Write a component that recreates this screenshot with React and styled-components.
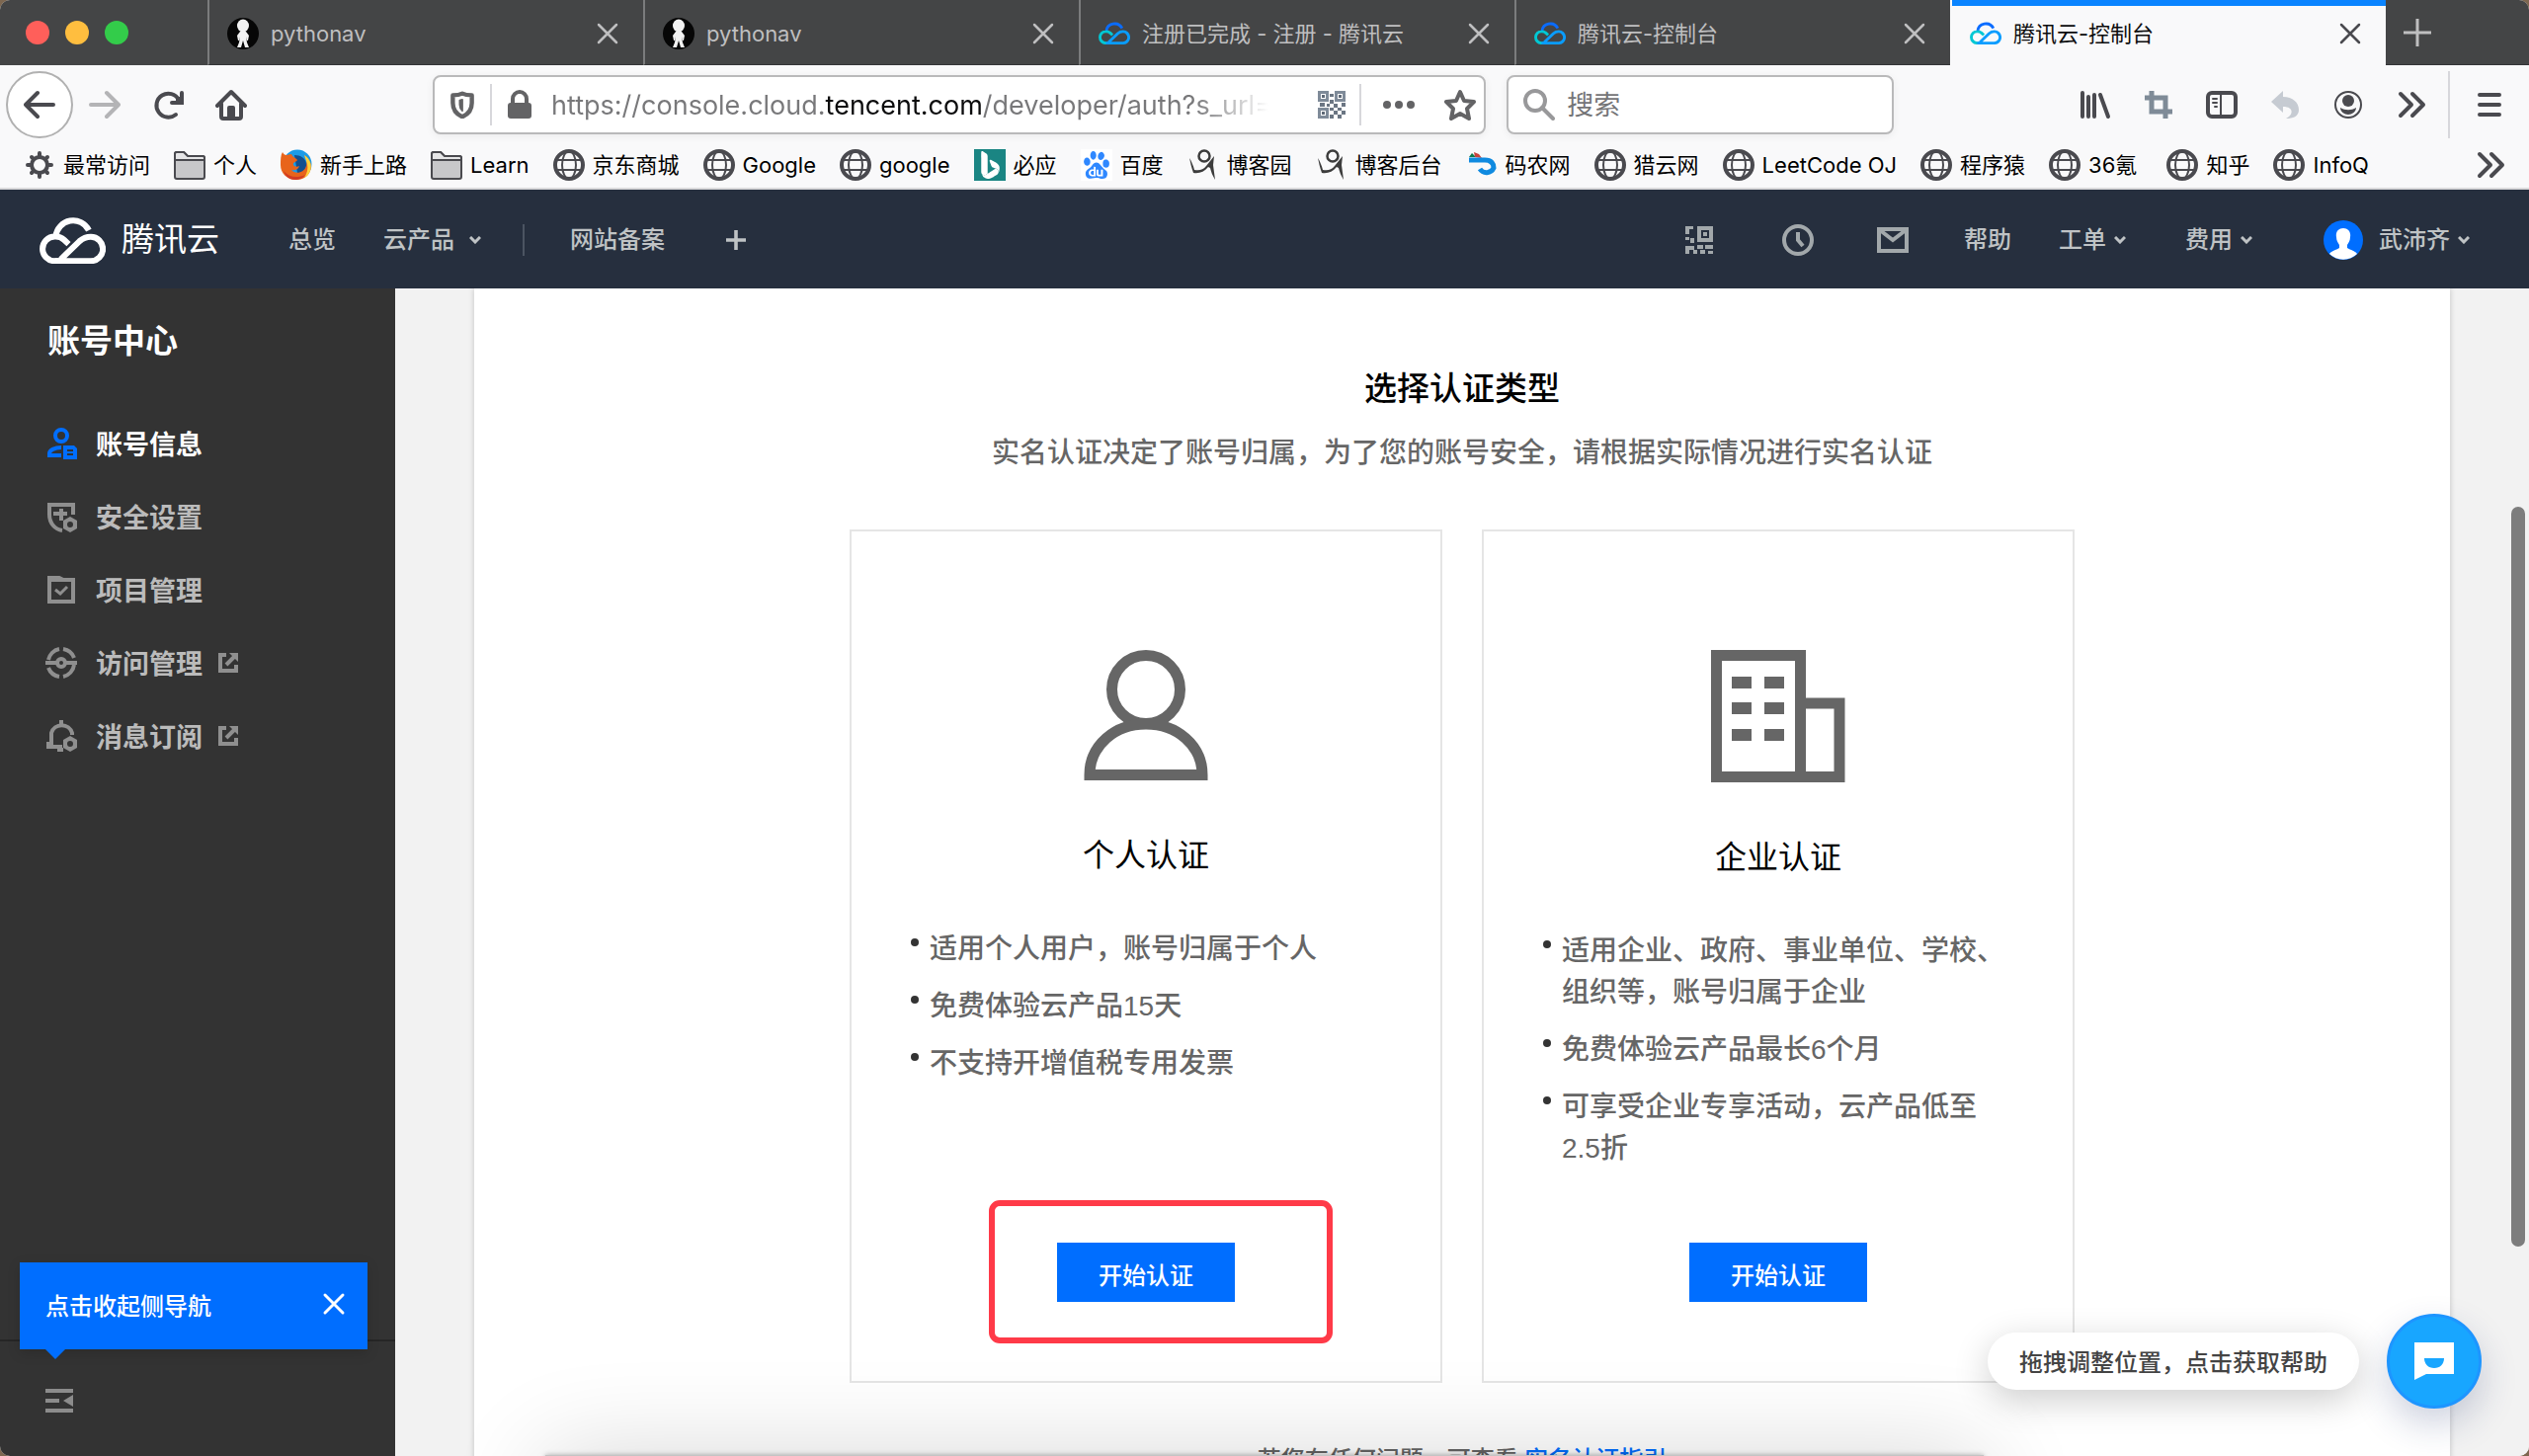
import React from "react";
import styled, { createGlobalStyle, css } from "styled-components";
import { BsBing } from "react-icons/bs";
import { SiBaidu } from "react-icons/si";

const GlobalStyle = createGlobalStyle`
  * {
    box-sizing: border-box;
  }
  body {
    margin: 0;
    background: #7d6750;
    overflow: hidden;
  }
  h1, h2, p, ul {
    margin: 0;
    padding: 0;
  }
  ul {
    list-style: none;
  }
  a {
    color: inherit;
    text-decoration: none;
  }
  button {
    margin: 0;
    padding: 0;
    border: none;
    background: none;
    color: inherit;
    font: inherit;
    cursor: pointer;
  }
  svg {
    display: block;
    flex: none;
  }
`;

const chromeFont = `Inter, "Noto Sans CJK SC", sans-serif`;
const pageFont = `"Liberation Sans", "Noto Sans CJK SC", sans-serif`;

const center = css`
  display: flex;
  align-items: center;
  justify-content: center;
`;

/* ---------- window ---------- */

const Window = styled.div`
  height: 100vh;
  display: flex;
  flex-direction: column;
  overflow: hidden;
  border-radius: 10px;
  background: #f2f2f2;
`;

const TabBar = styled.div`
  height: 66px;
  flex: none;
  display: flex;
  background: #444546;
  font-family: ${chromeFont};
  font-size: 22px;
  color: #bfbfc0;
`;

const Lights = styled.div`
  width: 210px;
  flex: none;
  display: flex;
  align-items: center;
  gap: 16px;
  padding-left: 26px;
`;

const Light = styled.button`
  width: 24px;
  height: 24px;
  border-radius: 50%;
  background: ${(props) => props.$color};
`;

const Tab = styled.div`
  flex: 0 1 441px;
  min-width: 0;
  display: flex;
  align-items: center;
  gap: 12px;
  padding: 2px 24px 0 18px;
  border-left: 2px solid ${(props) => (props.$active ? "#f9f9fa" : "#7b7c7d")};
  border-bottom: 1px solid #333436;
  ${(props) =>
    props.$active &&
    css`
      background: #f9f9fa;
      color: #4a4a4f;
      border-left-color: #f9f9fa;
      border-bottom-color: #f9f9fa;
      box-shadow: inset 0 6px #0a84ff;
    `}
`;

const TabTitle = styled.span`
  flex: 1;
  line-height: 32px;
  white-space: nowrap;
  overflow: hidden;
  color: ${(props) => (props.$active ? "#0c0c0d" : "inherit")};
`;

const TabEnd = styled.div`
  flex: 1;
  display: flex;
  align-items: center;
  padding-left: 18px;
  border-bottom: 1px solid #333436;
`;

const IconButton = styled.button`
  ${center};
  width: ${(props) => props.$w || 64}px;
  height: ${(props) => props.$h || 64}px;
  flex: none;
`;

const NavBar = styled.div`
  height: 80px;
  flex: none;
  display: flex;
  align-items: center;
  padding-left: 6px;
  background: #f9f9fa;
  color: #4a4a4f;
  font-family: ${chromeFont};
`;

const BackButton = styled.button`
  ${center};
  width: 68px;
  height: 68px;
  flex: none;
  border: 2px solid #b1b1b1;
  border-radius: 50%;
  background: #fff;
`;

const Spacer = styled.div`
  flex: 32;
`;

const Fields = styled.div`
  flex: 275;
  min-width: 0;
  display: flex;
  gap: 21px;
`;

const Field = styled.div`
  flex: ${(props) => props.$grow};
  min-width: 0;
  height: 60px;
  display: flex;
  align-items: center;
  border: 2px solid #b9b9ba;
  border-radius: 8px;
  background: #fff;
  color: #636365;
  box-shadow: 0 2px 8px rgba(0, 0, 0, 0.06);
`;

const UrlInput = styled.input`
  flex: 1;
  min-width: 0;
  height: 40px;
  margin-left: 4px;
  padding: 0;
  border: none;
  outline: none;
  font-family: ${chromeFont};
  font-size: 27px;
  color: transparent;
  background: linear-gradient(
    90deg,
    #78787a 277px,
    #0c0c0d 277px,
    #0c0c0d 435px,
    #78787a 435px,
    #78787a 650px,
    rgba(120, 120, 122, 0) 726px
  );
  -webkit-background-clip: text;
  background-clip: text;
`;

const SearchInput = styled.input`
  flex: 1;
  min-width: 0;
  padding: 0;
  margin-left: 12px;
  border: none;
  outline: none;
  background: none;
  font-family: ${chromeFont};
  font-size: 27px;
  &::placeholder {
    color: #757577;
    opacity: 1;
  }
`;

const SearchLabel = styled.label`
  padding-left: 15px;
`;

const FieldLine = styled.div`
  width: 2px;
  height: 42px;
  flex: none;
  background: #d7d7db;
`;

const BarLine = styled.div`
  width: 2px;
  height: 68px;
  margin-left: 5px;
  background: #d7d7db;
`;

const BookmarkBar = styled.nav`
  height: 46px;
  flex: none;
  display: flex;
  align-items: center;
  padding: 0 12px 2px 24px;
  border-bottom: 2px solid #d9d9da;
  background: #f9f9fa;
  color: #4a4a4f;
  font-family: ${chromeFont};
  font-size: 22px;
`;

const Bookmark = styled.a`
  display: flex;
  align-items: center;
  gap: 8px;
  margin-right: 24px;
  white-space: nowrap;
`;

const BookmarkText = styled.span`
  line-height: 32px;
  color: #000;
`;

const MoreBookmarks = styled.div`
  margin-left: auto;
  width: 54px;
`;

const Tile = styled.span`
  ${center};
  width: 32px;
  height: 32px;
  background: ${(props) => props.$bg};
  color: ${(props) => props.$fg};
`;

/* ---------- cloud console ---------- */

const Header = styled.header`
  height: 100px;
  flex: none;
  display: flex;
  align-items: center;
  padding: 2px 60px 0 40px;
  background: #262f3e;
  color: #bfc3c5;
  font-family: ${pageFont};
  font-size: 24px;
  font-weight: 500;
`;

const Brand = styled.a`
  display: flex;
  align-items: center;
  gap: 16px;
  margin-right: 46px;
  color: #fff;
  font-size: 33px;
  font-weight: 400;
  line-height: 48px;
`;

const HeaderLink = styled.a`
  display: flex;
  align-items: center;
  padding: 0 24px;
  line-height: 36px;
  white-space: nowrap;
`;

const HeaderMenu = styled.button`
  display: flex;
  align-items: center;
  gap: ${(props) => (props.$wide ? 15 : 8)}px;
  padding: 0 ${(props) => (props.$wide ? 24 : 36)}px 0 24px;
  line-height: 36px;
  white-space: nowrap;
`;

const HeaderLine = styled.div`
  width: 2px;
  height: 32px;
  margin: 0 22px 0 18px;
  background: #4b5462;
`;

const HeaderRight = styled.div`
  margin-left: auto;
  display: flex;
  align-items: center;
`;

const UserMenu = styled.button`
  display: flex;
  align-items: center;
  gap: 8px;
  padding-left: 36px;
  line-height: 36px;
`;

const UserName = styled.span`
  margin-left: 8px;
`;

const Body = styled.div`
  flex: 1;
  min-height: 0;
  display: flex;
  font-family: ${pageFont};
`;

const Sidebar = styled.aside`
  width: 400px;
  flex: none;
  display: flex;
  flex-direction: column;
  background: #333;
`;

const SideTitle = styled.h2`
  padding: 30px 48px 0;
  color: #fff;
  font-size: 33px;
  font-weight: 700;
  line-height: 48px;
`;

const SideList = styled.ul`
  flex: 1;
  padding-top: 42px;
`;

const SideLink = styled.a`
  height: 74px;
  display: flex;
  align-items: center;
  padding: 0 46px;
  color: ${(props) => (props.$active ? "#fff" : "#bbb")};
  font-size: 27px;
  font-weight: 700;
  svg {
    color: ${(props) => (props.$active ? "#006eff" : "#8f8f8f")};
  }
`;

const SideText = styled.span`
  margin: 0 16px 0 19px;
  padding-top: 3px;
  line-height: 40px;
`;

const SideFoot = styled.div`
  position: relative;
  height: 118px;
  padding: 48px 44px;
  border-top: 2px solid #262626;
`;

const Tip = styled.div`
  position: absolute;
  left: 20px;
  right: 28px;
  bottom: 108px;
  height: 88px;
  display: flex;
  align-items: center;
  justify-content: space-between;
  padding: 0 22px 4px 26px;
  background: #006eff;
  color: #fff;
  font-size: 24px;
  font-weight: 500;
  box-shadow: 0 4px 12px rgba(0, 0, 0, 0.15);
  &::after {
    content: "";
    position: absolute;
    left: 26px;
    top: 100%;
    border: 10px solid transparent;
    border-top-color: #006eff;
    border-bottom: none;
  }
`;

const Main = styled.main`
  position: relative;
  flex: 1;
  min-width: 0;
  overflow: hidden;
  padding: 0 80px;
  background: #f2f2f2;
`;

const Panel = styled.section`
  min-height: 100%;
  padding: 78px 0 80px;
  background: #fff;
  box-shadow: 0 0 6px rgba(0, 0, 0, 0.2);
  text-align: center;
`;

const Title = styled.h1`
  color: #000;
  font-size: 33px;
  font-weight: 500;
  line-height: 48px;
`;

const Lead = styled.p`
  margin-top: 20px;
  color: #666;
  font-size: 28px;
  font-weight: 500;
  line-height: 42px;
`;

const Cards = styled.div`
  display: flex;
  justify-content: center;
  gap: 40px;
  margin-top: 56px;
`;

const Card = styled.article`
  width: 600px;
  min-height: 864px;
  display: flex;
  flex-direction: column;
  align-items: center;
  padding: 120px 60px 80px;
  border: 2px solid #e5e5e5;
`;

const CardTitle = styled.h2`
  margin: 52px 0 50px;
  color: #000;
  font-size: 32px;
  font-weight: 400;
  line-height: 48px;
`;

const Points = styled.ul`
  width: 100%;
  display: flex;
  flex-direction: column;
  gap: 16px;
  color: #666;
  font-size: 28px;
  font-weight: 500;
  line-height: 42px;
  text-align: left;
`;

const Point = styled.li`
  position: relative;
  padding-left: 19px;
  &::before {
    content: "";
    position: absolute;
    left: 0;
    top: 10px;
    width: 8px;
    height: 8px;
    border-radius: 50%;
    background: #333;
  }
`;

const Action = styled.div`
  position: relative;
  margin-top: auto;
`;

const StartButton = styled.button`
  width: 180px;
  height: 60px;
  padding-top: 3px;
  background: #006eff;
  color: #fff;
  font-size: 24px;
  font-weight: 500;
`;

const Marker = styled.div`
  position: absolute;
  inset: -43px -99px -42px -69px;
  border: 6px solid #ff3a48;
  border-radius: 11px;
  pointer-events: none;
`;

const Guide = styled.p`
  margin-top: 60px;
  color: #666;
  font-size: 24px;
  font-weight: 500;
  line-height: 36px;
  a {
    color: #006eff;
  }
`;

const BottomSheet = styled.div`
  position: absolute;
  left: 152px;
  right: 552px;
  bottom: -200px;
  height: 201px;
  background: #c4c4c4;
  box-shadow: 0 0 100px rgba(0, 0, 0, 0.16), 0 0 5px rgba(0, 0, 0, 0.3);
`;

const ScrollThumb = styled.div`
  position: absolute;
  right: 4px;
  top: 221px;
  bottom: 212px;
  width: 14px;
  border-radius: 7px;
  background: #7d7d7d;
`;

const Help = styled.div`
  position: absolute;
  right: 48px;
  bottom: 48px;
  display: flex;
  align-items: center;
  gap: 28px;
`;

const HelpText = styled.div`
  padding: 4px 32px 0;
  border-radius: 29px;
  background: #fff;
  color: #444;
  font-size: 24px;
  font-weight: 500;
  line-height: 54px;
  box-shadow: 0 10px 36px rgba(0, 0, 0, 0.2);
`;

const HelpButton = styled.button`
  ${center};
  width: 96px;
  height: 96px;
  border: 3px solid #1e95ff;
  border-radius: 50%;
  background: #18a6ff;
  box-shadow: 0 16px 36px rgba(30, 50, 110, 0.22);
`;

/* ---------- icons ---------- */

const Stroke = ({ size = 32, w = 4, color = "currentColor", children }) => (
  <svg
    width={size}
    height={size}
    viewBox="0 0 32 32"
    fill="none"
    stroke={color}
    strokeWidth={w}
    strokeLinecap="round"
    strokeLinejoin="round"
  >
    {children}
  </svg>
);

const CloudLogo = ({ width = 67, colors = ["#fff", "#fff", "#fff"] }) => (
  <svg
    width={width}
    height={width * 0.72}
    viewBox="0 0 200 144"
    fill="none"
    strokeWidth="18"
  >
    <path stroke={colors[0]} d="M49 60A53 53 0 0 1 149 42" />
    <path
      stroke={colors[1]}
      d="M88 84L74 71A38 38 0 0 0 46 61.500A36.750 36.750 0 0 0 46 135H60"
    />
    <path
      stroke={colors[2]}
      d="M46 135H155A36 36 0 0 0 155 62C141 62 130 67 121 75L64 130"
    />
  </svg>
);

const tint = ["#0a6cff", "#00c8d4", "#0a9dff"];

const Figure = () => (
  <svg width="32" height="32" viewBox="0 0 32 32">
    <circle cx="16" cy="16" r="16" fill="#060606" />
    <g fill="#f2f2f2">
      <ellipse cx="16" cy="8" rx="6" ry="6.500" />
      <path d="M13 14h6l3 4-1 5h-1l-1-4 1 6 2 5h-4l-2-7-2 7h-4l2-5 1-6-1 4h-1l-1-5z" />
    </g>
  </svg>
);

const Close = ({ w = 2.5, size = 24 }) => (
  <Stroke size={size} w={w * 1.33}>
    <path d="M4 4L28 28M28 4L4 28" />
  </Stroke>
);

const Plus = ({ size = 28, w = 3 }) => (
  <svg width={size} height={size} viewBox="0 0 28 28" stroke="currentColor" strokeWidth={w}>
    <path d="M14 0V28M0 14H28" />
  </svg>
);

const Globe = () => (
  <Stroke w={2}>
    <circle cx="16" cy="16" r="14" strokeWidth="4" />
    <ellipse cx="16" cy="16" rx="7" ry="14" />
    <path d="M3 11H29M3 21H29" />
  </Stroke>
);

const Folder = () => (
  <Stroke w={2}>
    <path
      fill="#c8c8ca"
      d="M1 5a2 2 0 0 1 2-2h7l4 4h15a2 2 0 0 1 2 2v19a2 2 0 0 1-2 2H3a2 2 0 0 1-2-2z"
    />
    <path fill="#e6e6e7" d="M1 11V5a2 2 0 0 1 2-2h7l4 4h15a2 2 0 0 1 2 2v2z" />
  </Stroke>
);

const Gear = () => (
  <Stroke w={4}>
    <circle cx="16" cy="16" r="8" />
    <path d="M16 4v3M16 25v3M4 16h3M25 16h3M8 8l1.500 1.500M22.500 22.500L24 24M24 8l-1.500 1.500M9.500 22.500L8 24" />
  </Stroke>
);

const Firefox = () => (
  <svg width="32" height="32" viewBox="0 0 32 32">
    <circle cx="17" cy="15" r="14.500" fill="#1c9be6" />
    <path d="M14 6c6 0 12 3 12 10s-5 9-9 8z" fill="#134f8e" />
    <path
      d="M2 3c1 2 2 3 4 3l5-1c1 3 5 4 6 6-1 2-5 2-4 5 1 2 4 2 6 1-1 4-5 5-8 4 4 5 13 3 15-4 1-4 0-8-2-11 6 4 8 10 6 16-2 6-8 9-14 9C6 31 0 24 0 16 0 11 0 6 2 3z"
      fill="#e8641b"
    />
    <path d="M24 6c6 4 8 10 6 16-1 3-3 5-6 7 3-5 4-9 3-14z" fill="#ffd23c" />
    <path d="M3 22c5 6 13 8 22 4-3 4-7 5-10 5C9 31 5 28 3 22z" fill="#d23b22" />
  </svg>
);

const Blogger = () => (
  <svg width="32" height="32" viewBox="0 0 32 32">
    <circle cx="17" cy="7" r="5.500" fill="none" stroke="#3c3c3c" strokeWidth="2.500" />
    <path
      d="M2 9c2 3 4 8 5 12 5 1 9 0 12-4l8-10-1 9 2 15c-3-5-4-8-5-12l-2-1c-4 5-9 7-15 6C4 19 3 13 2 9z"
      fill="#3c3c3c"
    />
  </svg>
);

const Coder = () => (
  <svg width="32" height="32" viewBox="0 0 32 32">
    <path d="M3 8l3-4 4 4z" fill="#0c7a4b" />
    <path d="M8 3l5 2 3 4-7-1z" fill="#c8433c" />
    <path
      d="M3 11H19C26 11 28 15 28 19A8 8 0 0 1 14 20"
      fill="none"
      stroke="#0f8ae0"
      strokeWidth="5"
    />
  </svg>
);

const BackArrow = ({ flip, color }) => (
  <Stroke color={color}>
    {flip ? <path d="M2 16H30M18 4L30 16L18 28" /> : <path d="M30 16H2M14 4L2 16L14 28" />}
  </Stroke>
);

const Reload = () => (
  <Stroke>
    <path d="M24 26A12 12 0 1 1 27 11" />
    <path d="M30 4V14H20" strokeLinejoin="miter" />
    <path d="M25 9h4v4h-4z" fill="currentColor" strokeWidth="2" />
  </Stroke>
);

const Home = () => (
  <Stroke>
    <path d="M2 17L16 3L30 17" />
    <path d="M6 15V28a2 2 0 0 0 2 2H24a2 2 0 0 0 2-2V15" />
    <path d="M14 28V19h4V28" />
  </Stroke>
);

const Shield = () => (
  <Stroke size={28} w={5}>
    <path d="M16 3C12 5 9 5 5 5v9c0 8 4 13 11 16 7-3 11-8 11-16V5c-4 0-7 0-11-2z" />
    <path d="M16 10l-3 1v5c0 3 1 5 3 7z" fill="currentColor" strokeWidth="2" />
  </Stroke>
);

const Lock = () => (
  <svg width="26" height="30" viewBox="0 0 26 30">
    <path d="M6 14V9a7 7 0 0 1 14 0v5" fill="none" stroke="#636365" strokeWidth="4" />
    <rect x="1" y="13" width="24" height="16" rx="3" fill="#636365" />
  </svg>
);

const qrFinder = (x, y) => (
  <>
    <rect x={x + 1.5} y={y + 1.5} width="8" height="8" fill="none" stroke="#7f8b99" strokeWidth="3" />
    <rect x={x + 4} y={y + 4} width="3" height="3" fill="#5f6a77" />
  </>
);

const UrlQr = () => (
  <svg width="28" height="28" viewBox="0 0 28 28">
    {qrFinder(0, 0)}
    {qrFinder(17, 0)}
    {qrFinder(0, 17)}
    <path
      d="M12 3h4v3h-4zM12 9h4v4h-4zM2 12h5v4H2zM9 13h3v3H9zM16 13h4v4h-4zM24 12h4v4h-4zM20 17h4v3h-4zM12 17h4v3h-4zM16 20h4v4h-4zM24 20h4v4h-4zM12 24h4v4h-4zM20 24h4v4h-4z"
      fill="#6b7683"
    />
  </svg>
);

const Dots = () => (
  <svg width="32" height="32" viewBox="0 0 32 32" fill="currentColor">
    <circle cx="4" cy="16" r="4" />
    <circle cx="16" cy="16" r="4" />
    <circle cx="28" cy="16" r="4" />
  </svg>
);

const Star = () => (
  <Stroke>
    <path d="M16 3l4 9 10 1-7 7 2 10-9-5-9 5 2-10-7-7 10-1z" />
  </Stroke>
);

const SearchIcon = () => (
  <Stroke color="#98989a">
    <circle cx="12" cy="12" r="10" />
    <path d="M19 19L30 30" />
  </Stroke>
);

const Library = () => (
  <Stroke>
    <path d="M3 4V28M9 8V28M15 6V28M21 6L29 28" />
  </Stroke>
);

const Crop = () => (
  <svg width="28" height="28" viewBox="0 0 28 28" fill="none" stroke="#7f8b97" strokeWidth="5">
    <path d="M0 7H21V28M7 0V21H28" />
  </svg>
);

const SidebarIcon = () => (
  <Stroke>
    <rect x="2" y="4" width="28" height="24" rx="4" />
    <path d="M15 5V27" strokeWidth="2" />
    <path d="M7 10h4M7 14h4M9 18h2" strokeWidth="2" />
  </Stroke>
);

const Undo = () => (
  <svg width="28" height="28" viewBox="0 0 28 28" fill="#c6cbd2">
    <path d="M0 11L12 0V6C22 6 28 12 28 19S22 28 15 28C22 25 24 16 12 16V22z" />
  </svg>
);

const Account = () => (
  <Stroke w={2}>
    <circle cx="16" cy="16" r="13" />
    <circle cx="16" cy="12" r="6" fill="currentColor" stroke="none" />
    <path d="M8 19c5 3 11 3 16 0 0 4-4 7-8 7s-8-3-8-7z" fill="currentColor" stroke="none" />
  </Stroke>
);

const Chevrons = () => (
  <Stroke>
    <path d="M5 5L16 16L5 27M17 5L28 16L17 27" />
  </Stroke>
);

const Menu = () => (
  <Stroke>
    <path d="M6 6H26M6 16H26M6 26H26" />
  </Stroke>
);

const Caret = () => (
  <svg width="12" height="8" viewBox="0 0 12 8" fill="none" stroke="currentColor" strokeWidth="3">
    <path d="M1 1L6 6L11 1" />
  </svg>
);

const HeaderQr = () => (
  <svg width="28" height="28" viewBox="0 0 28 28" fill="#a2a8ab">
    <path d="M0 0h8v3H4v5H0zM0 11h4v3H0zM5 12h4v5H5zM0 20h9v4H4v4H0zM8 24h4v4H8z" />
    <path d="M12 0h16v16H12zM16 4v8h8V4z" fillRule="evenodd" />
    <path d="M18 6h4v4h-4zM12 19h6v4h-6zM20 19h8v4h-8zM15 24h5v4h-5zM23 25h5v3h-5z" />
  </svg>
);

const Clock = () => (
  <svg width="32" height="32" viewBox="0 0 32 32" fill="none" stroke="#a2a8ab" strokeWidth="4">
    <circle cx="16" cy="16" r="14" />
    <path d="M16 8V16L21 22" />
  </svg>
);

const Mail = () => (
  <svg width="32" height="26" viewBox="0 0 32 26" fill="none" stroke="#a2a8ab" strokeWidth="4">
    <path d="M2 2H30V24H2zM3 3L16 13L29 3" />
  </svg>
);

const Avatar = () => (
  <svg width="40" height="40" viewBox="0 0 40 40">
    <circle cx="20" cy="20" r="20" fill="#006eff" />
    <path
      d="M20 8c5 0 8 4 7 9 0 4-2 6-3 8v3c3 2 8 3 10 6a20 20 0 0 1-28 0c2-3 7-4 10-6v-3c-1-2-3-4-3-8-1-5 2-9 7-9z"
      fill="#fff"
    />
  </svg>
);

const SideIcon = ({ children }) => (
  <svg width="32" height="32" viewBox="0 0 32 32" fill="none" stroke="currentColor" strokeWidth="4">
    {children}
  </svg>
);

const hexNut = (
  <path
    d="M25 16l7 4v8l-7 4-7-4v-8zM25 21a3 3 0 1 0 0 6 3 3 0 0 0 0-6z"
    fill="currentColor"
    fillRule="evenodd"
    stroke="none"
  />
);

const AccountInfo = () => (
  <SideIcon>
    <circle cx="16" cy="8" r="6" />
    <path d="M16 20C9 20 4 23 4 26V28H16" />
    <path
      d="M18 18h11l3 3v11H18zM22 22v2h6v-2zM22 26v2h6v-2z"
      fill="currentColor"
      fillRule="evenodd"
      stroke="none"
    />
  </SideIcon>
);

const Security = () => (
  <SideIcon>
    <path d="M28 14V4H4V14C4 23 10 29 17 30" />
    <path d="M8 13H22M16 8V20" />
    {hexNut}
  </SideIcon>
);

const Project = () => (
  <SideIcon>
    <path d="M4 4H14L18 6H28V28H4z" />
    <path d="M10 16L15 20L22 13" strokeWidth="3" />
    <path d="M4 6H28" />
  </SideIcon>
);

const Access = () => (
  <SideIcon>
    <circle cx="16" cy="16" r="4" />
    <path d="M0 16H12M20 16H32" />
    <path d="M3 13A14 14 0 0 1 14 2M18 2A14 14 0 0 1 29 11M29 18A14 14 0 0 1 18 30M14 30A14 14 0 0 1 3 21" />
  </SideIcon>
);

const Bell = () => (
  <SideIcon>
    <path d="M27 15V13A11 11 0 0 0 6 13V24H3V27H17" />
    <path d="M16 0V4M12 30H18" />
    {hexNut}
  </SideIcon>
);

const External = () => (
  <svg width="20" height="20" viewBox="0 0 20 20" fill="none" stroke="currentColor" strokeWidth="4">
    <path d="M8 2H2V18H18V12M8 12L17 3" />
    <path d="M11 0H20V9z" fill="currentColor" stroke="none" />
  </svg>
);

const Collapse = () => (
  <svg width="32" height="24" viewBox="0 0 32 24" fill="#8c8c8c">
    <path d="M2 0h28v4H2zM2 10h14v4H2zM2 20h28v4H2zM30 6v12l-10-6z" />
  </svg>
);

const Person = () => (
  <svg width="126" height="132" viewBox="0 0 126 132" fill="none" stroke="#666" strokeWidth="11">
    <circle cx="63" cy="40" r="34.500" />
    <path d="M6 126.500C6 96 32 75 63 75S120 96 120 126.500z" />
  </svg>
);

const Building = () => (
  <svg width="136" height="134" viewBox="0 0 136 134" fill="none" stroke="#666" strokeWidth="11">
    <path d="M5.500 5.500H90.500V128.500H5.500zM90.500 54H130V128.500H90.500" />
    <path
      d="M21 27h20v12H21zM54 27h20v12H54zM21 53h20v12H21zM54 53h20v12H54zM21 80h20v12H21zM54 80h20v12H54z"
      fill="#666"
      stroke="none"
    />
  </svg>
);

const Bubble = () => (
  <svg width="40" height="38" viewBox="0 0 40 38">
    <path d="M0 0H40V32H12L0 38z" fill="#fff" />
    <path d="M10 16H30C30 22 26 26 20 26S10 22 10 16z" fill="#18a6ff" />
  </svg>
);

/* ---------- data ---------- */

const cloudIcon = <CloudLogo width={32} colors={tint} />;

const tabs = [
  { id: 1, icon: <Figure />, title: "pythonav" },
  { id: 2, icon: <Figure />, title: "pythonav" },
  { id: 3, icon: cloudIcon, title: "注册已完成 - 注册 - 腾讯云" },
  { id: 4, icon: cloudIcon, title: "腾讯云-控制台" },
  { id: 5, icon: cloudIcon, title: "腾讯云-控制台", active: true }
];

const bookmarks = [
  [<Gear />, "最常访问"],
  [<Folder />, "个人"],
  [<Firefox />, "新手上路"],
  [<Folder />, "Learn"],
  [<Globe />, "京东商城"],
  [<Globe />, "Google"],
  [<Globe />, "google"],
  [<Tile $bg="#1a8583" $fg="#fff"><BsBing size={28} /></Tile>, "必应"],
  [<Tile $bg="#fff" $fg="#2f88ff"><SiBaidu size={28} /></Tile>, "百度"],
  [<Blogger />, "博客园"],
  [<Blogger />, "博客后台"],
  [<Coder />, "码农网"],
  [<Globe />, "猎云网"],
  [<Globe />, "LeetCode OJ"],
  [<Globe />, "程序猿"],
  [<Globe />, "36氪\u00a0"],
  [<Globe />, "知乎"],
  [<Globe />, "InfoQ"]
];

const sideItems = [
  { text: "账号信息", icon: <AccountInfo />, active: true },
  { text: "安全设置", icon: <Security /> },
  { text: "项目管理", icon: <Project /> },
  { text: "访问管理", icon: <Access />, external: true },
  { text: "消息订阅", icon: <Bell />, external: true }
];

const types = [
  {
    title: "个人认证",
    icon: <Person />,
    marked: true,
    points: ["适用个人用户，账号归属于个人", "免费体验云产品15天", "不支持开增值税专用发票"]
  },
  {
    title: "企业认证",
    icon: <Building />,
    points: [
      "适用企业、政府、事业单位、学校、组织等，账号归属于企业",
      "免费体验云产品最长6个月",
      "可享受企业专享活动，云产品低至2.5折"
    ]
  }
];

const Browser = () => (
  <>
    <TabBar>
      <Lights>
        <Light $color="#ff5f5a" aria-label="关闭窗口" />
        <Light $color="#ffbe3f" aria-label="最小化" />
        <Light $color="#33cc4a" aria-label="缩放" />
      </Lights>
      {tabs.map((tab) => (
        <Tab key={tab.id} $active={tab.active}>
          {tab.icon}
          <TabTitle $active={tab.active}>{tab.title}</TabTitle>
          <IconButton $w={24} $h={24} aria-label="关闭标签页">
            <Close />
          </IconButton>
        </Tab>
      ))}
      <TabEnd>
        <IconButton $w={28} $h={28} aria-label="新标签页">
          <Plus />
        </IconButton>
      </TabEnd>
    </TabBar>
    <NavBar>
      <BackButton aria-label="后退">
        <BackArrow />
      </BackButton>
      <IconButton aria-label="前进">
        <BackArrow flip color="#b4b4b6" />
      </IconButton>
      <IconButton aria-label="刷新">
        <Reload />
      </IconButton>
      <IconButton aria-label="主页">
        <Home />
      </IconButton>
      <Spacer />
      <Fields>
        <Field $grow={200}>
          <IconButton $w={56} $h={56} aria-label="跟踪保护">
            <Shield />
          </IconButton>
          <FieldLine />
          <IconButton $w={56} $h={56} aria-label="网站信息">
            <Lock />
          </IconButton>
          <UrlInput
            aria-label="网址"
            defaultValue="https://console.cloud.tencent.com/developer/auth?s_url="
          />
          <IconButton $w={56} $h={56} aria-label="二维码">
            <UrlQr />
          </IconButton>
          <FieldLine />
          <IconButton $w={76} $h={56} aria-label="页面操作">
            <Dots />
          </IconButton>
          <IconButton $w={48} $h={56} aria-label="收藏">
            <Star />
          </IconButton>
        </Field>
        <Field $grow={73}>
          <SearchLabel htmlFor="search">
            <SearchIcon />
          </SearchLabel>
          <SearchInput id="search" placeholder="搜索" aria-label="搜索" />
        </Field>
      </Fields>
      <Spacer />
      <IconButton aria-label="书签库"><Library /></IconButton>
      <IconButton aria-label="截图"><Crop /></IconButton>
      <IconButton aria-label="侧栏"><SidebarIcon /></IconButton>
      <IconButton aria-label="撤销"><Undo /></IconButton>
      <IconButton aria-label="账户"><Account /></IconButton>
      <IconButton aria-label="更多工具"><Chevrons /></IconButton>
      <BarLine />
      <IconButton $w={80} aria-label="菜单"><Menu /></IconButton>
    </NavBar>
    <BookmarkBar>
      {bookmarks.map(([icon, text]) => (
        <Bookmark key={text} href="#">
          {icon}
          <BookmarkText>{text}</BookmarkText>
        </Bookmark>
      ))}
      <MoreBookmarks>
        <IconButton $w={54} $h={32} aria-label="更多书签"><Chevrons /></IconButton>
      </MoreBookmarks>
    </BookmarkBar>
  </>
);

const ConsoleHeader = () => (
  <Header>
    <Brand href="#">
      <CloudLogo />
      腾讯云
    </Brand>
    <HeaderLink href="#">总览</HeaderLink>
    <HeaderMenu $wide>
      云产品
      <Caret />
    </HeaderMenu>
    <HeaderLine />
    <HeaderLink href="#">网站备案</HeaderLink>
    <IconButton $w={96} aria-label="添加">
      <Plus size={20} w={5} />
    </IconButton>
    <HeaderRight>
      <IconButton $w={104} aria-label="小程序"><HeaderQr /></IconButton>
      <IconButton $w={96} aria-label="最近访问"><Clock /></IconButton>
      <IconButton $w={96} aria-label="站内信"><Mail /></IconButton>
      <HeaderLink href="#">帮助</HeaderLink>
      <HeaderMenu>
        工单
        <Caret />
      </HeaderMenu>
      <HeaderMenu>
        费用
        <Caret />
      </HeaderMenu>
      <UserMenu>
        <Avatar />
        <UserName>武沛齐</UserName>
        <Caret />
      </UserMenu>
    </HeaderRight>
  </Header>
);

const SideNav = () => (
  <Sidebar>
    <SideTitle>账号中心</SideTitle>
    <SideList>
      {sideItems.map((item) => (
        <li key={item.text}>
          <SideLink href="#" $active={item.active}>
            {item.icon}
            <SideText>{item.text}</SideText>
            {item.external && <External />}
          </SideLink>
        </li>
      ))}
    </SideList>
    <SideFoot>
      <IconButton $w={32} $h={24} aria-label="收起侧导航">
        <Collapse />
      </IconButton>
      <Tip>
        点击收起侧导航
        <IconButton $w={24} $h={24} aria-label="关闭提示">
          <Close w={3} />
        </IconButton>
      </Tip>
    </SideFoot>
  </Sidebar>
);

export default function App() {
  return (
    <Window>
      <GlobalStyle />
      <Browser />
      <ConsoleHeader />
      <Body>
        <SideNav />
        <Main>
          <Panel>
            <Title>选择认证类型</Title>
            <Lead>实名认证决定了账号归属，为了您的账号安全，请根据实际情况进行实名认证</Lead>
            <Cards>
              {types.map((type) => (
                <Card key={type.title}>
                  {type.icon}
                  <CardTitle>{type.title}</CardTitle>
                  <Points>
                    {type.points.map((point) => (
                      <Point key={point}>{point}</Point>
                    ))}
                  </Points>
                  <Action>
                    <StartButton>开始认证</StartButton>
                    {type.marked && <Marker />}
                  </Action>
                </Card>
              ))}
            </Cards>
            <Guide>
              若您有任何问题，可查看 <a href="#">实名认证指引</a>
            </Guide>
          </Panel>
          <BottomSheet />
          <ScrollThumb />
          <Help>
            <HelpText>拖拽调整位置，点击获取帮助</HelpText>
            <HelpButton aria-label="在线帮助">
              <Bubble />
            </HelpButton>
          </Help>
        </Main>
      </Body>
    </Window>
  );
}
